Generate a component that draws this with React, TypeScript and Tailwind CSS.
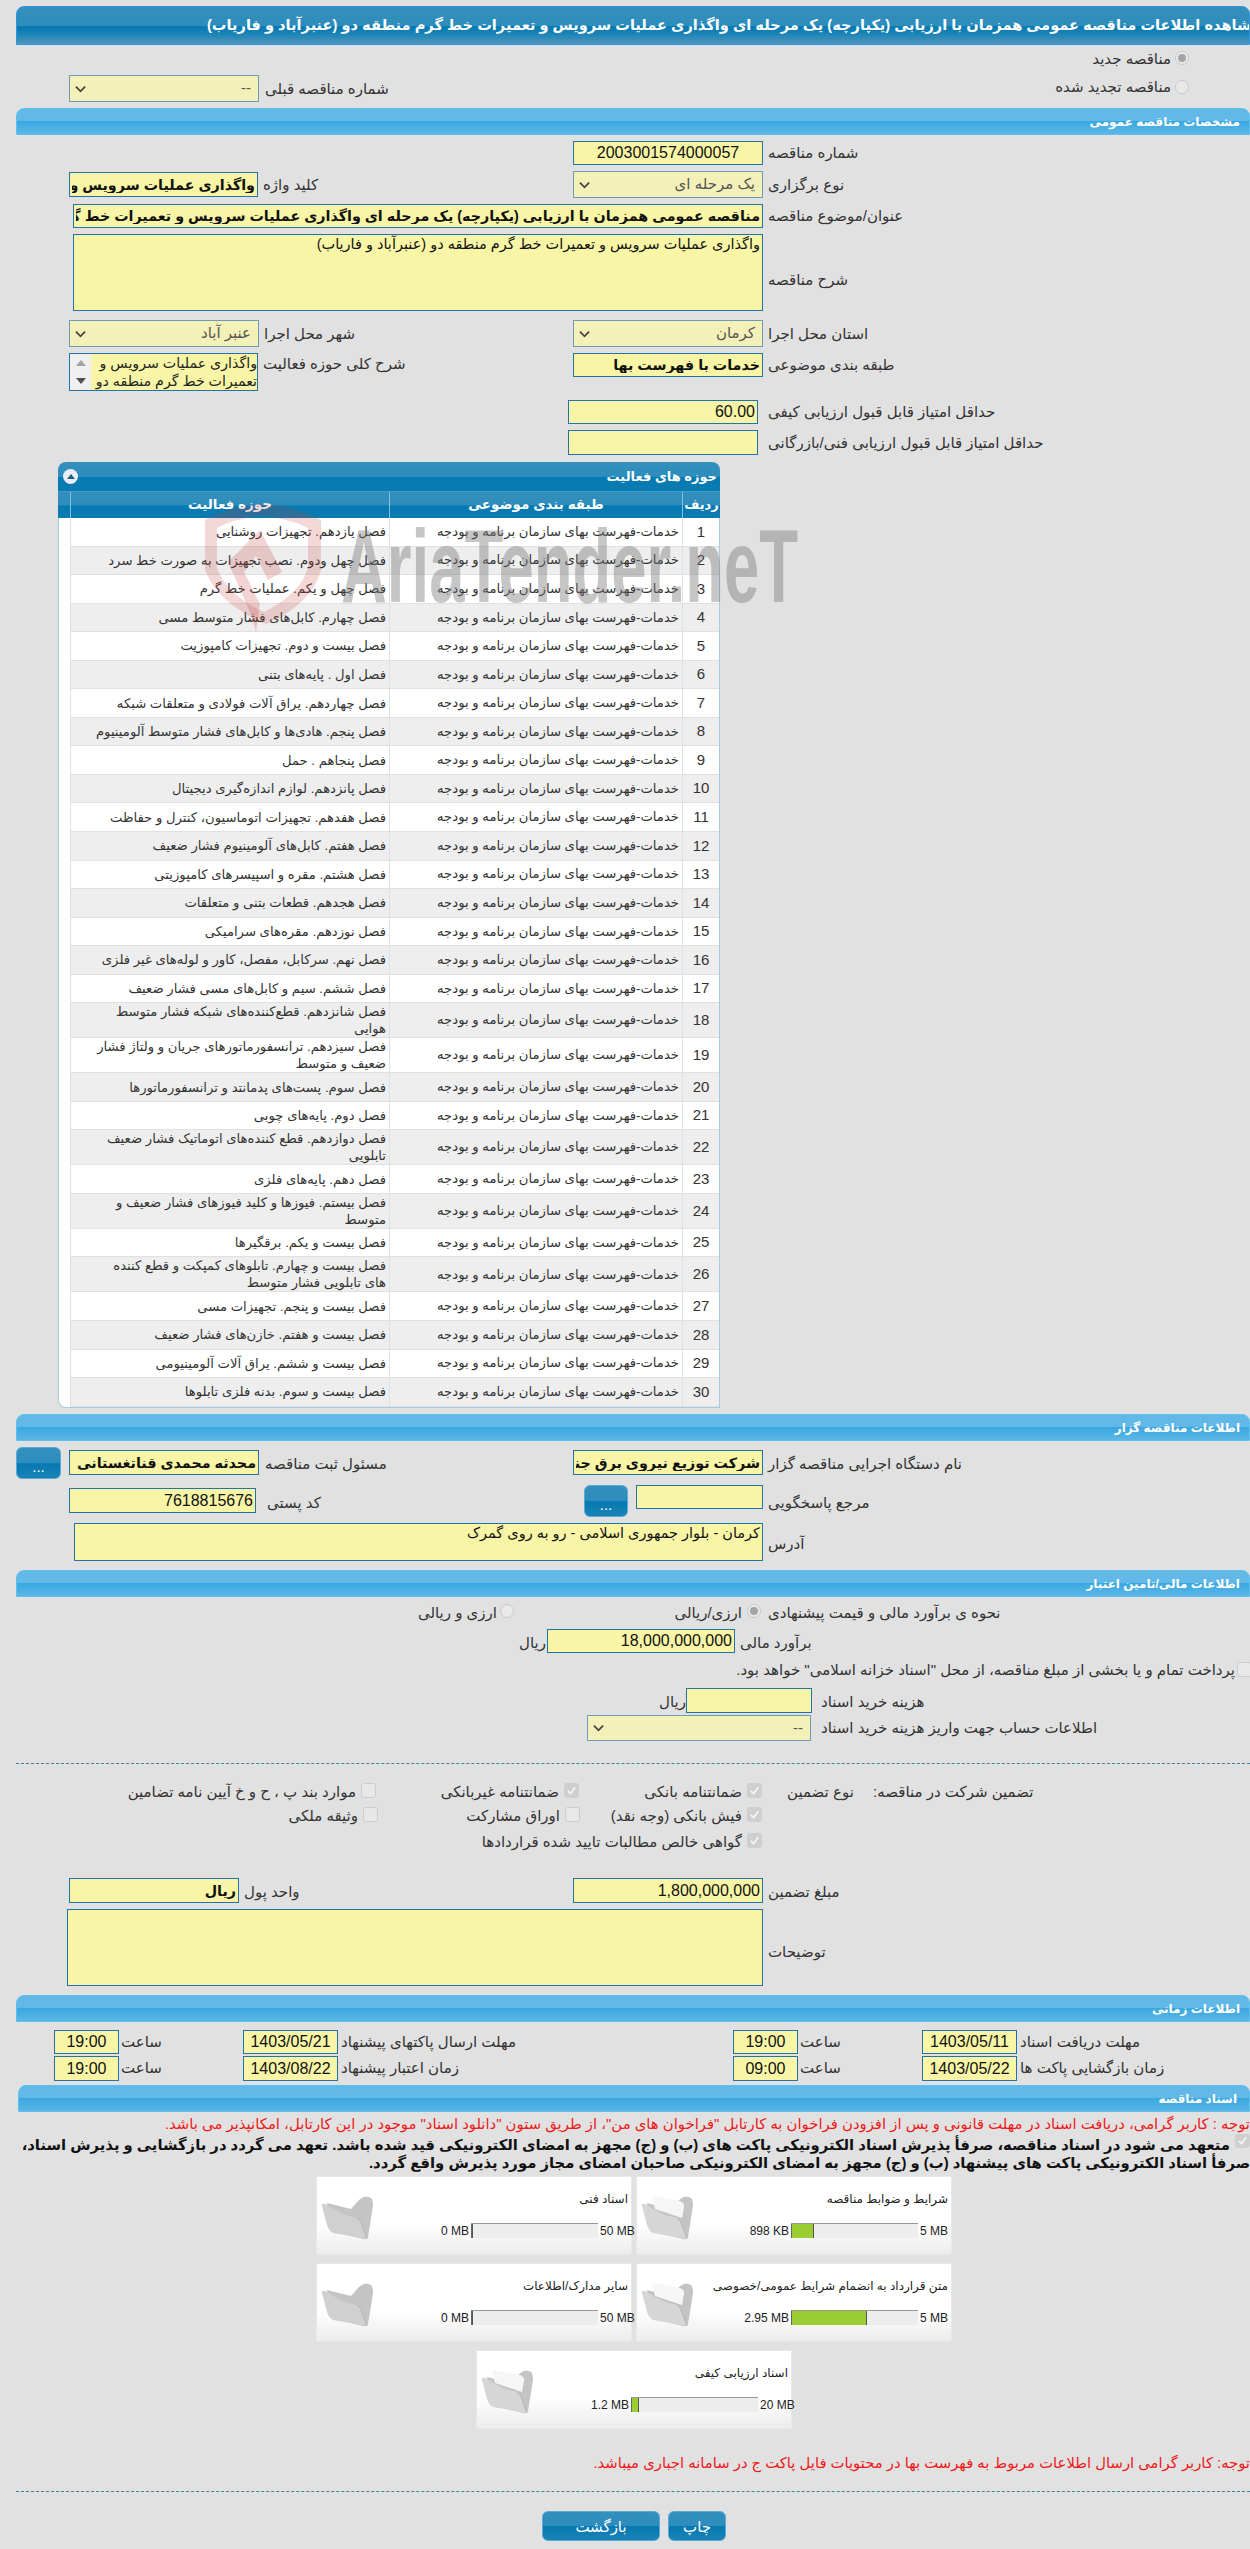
import React from "react";

const inp = "border border-[#2373aa] bg-[#f8f6a6] text-[#111] px-[2px] outline-none h-full min-w-0";
const lbl = "text-[15px] text-[#333] text-left whitespace-nowrap";
const opt = "text-[15px] text-[#333] whitespace-nowrap";
const sect = "h-[27px] rounded-t-[8px] border border-[#5cc0f0] bg-[linear-gradient(#62b9e8_0%,#62b9e8_48%,#3aa8e0_50%,#5cb6e6_100%)] text-white text-[12px] font-bold flex items-center";
const btn = "rounded-[6px] border border-[#5aa9d6] bg-[linear-gradient(#3290bd_0%,#2d8dbc_50%,#0579b1_52%,#1a83b6_100%)] text-white text-[15px] flex items-center justify-center";

const rows: string[] = [
  "فصل یازدهم. تجهیزات روشنایی",
  "فصل چهل ودوم. نصب تجهیزات به صورت خط سرد",
  "فصل چهل و یکم. عملیات خط گرم",
  "فصل چهارم. کابل‌های فشار متوسط مسی",
  "فصل بیست و دوم. تجهیزات کامپوزیت",
  "فصل اول . پایه‌های بتنی",
  "فصل چهاردهم. یراق آلات فولادی و متعلقات شبکه",
  "فصل پنجم. هادی‌ها و کابل‌های فشار متوسط آلومینیوم",
  "فصل پنجاهم . حمل",
  "فصل پانزدهم. لوازم اندازه‌گیری دیجیتال",
  "فصل هفدهم. تجهیزات اتوماسیون، کنترل و حفاظت",
  "فصل هفتم. کابل‌های آلومینیوم فشار ضعیف",
  "فصل هشتم. مقره و اسپیسرهای کامپوزیتی",
  "فصل هجدهم. قطعات بتنی و متعلقات",
  "فصل نوزدهم. مقره‌های سرامیکی",
  "فصل نهم. سرکابل، مفصل، کاور و لوله‌های غیر فلزی",
  "فصل ششم. سیم و کابل‌های مسی فشار ضعیف",
  "فصل شانزدهم. قطع‌کننده‌های شبکه فشار متوسط|هوایی",
  "فصل سیزدهم. ترانسفورماتورهای جریان و ولتاژ فشار|ضعیف و متوسط",
  "فصل سوم. پست‌های پدمانتد و ترانسفورماتورها",
  "فصل دوم. پایه‌های چوبی",
  "فصل دوازدهم. قطع کننده‌های اتوماتیک فشار ضعیف|تابلویی",
  "فصل دهم. پایه‌های فلزی",
  "فصل بیستم. فیوزها و کلید فیوزهای فشار ضعیف و|متوسط",
  "فصل بیست و یکم. برقگیرها",
  "فصل بیست و چهارم. تابلوهای کمپکت و قطع کننده|های تابلویی فشار متوسط",
  "فصل بیست و پنجم. تجهیزات مسی",
  "فصل بیست و هفتم. خازن‌های فشار ضعیف",
  "فصل بیست و ششم. یراق آلات آلومینیومی",
  "فصل بیست و سوم. بدنه فلزی تابلوها",
];

function Select({ value, className }: { value: string; className: string }) {
  return (
    <div dir="ltr" className={`border border-[#6f9bb5] bg-[#f3f0b8] h-full flex items-center justify-between pl-[5px] pr-[7px] ${className}`}>
      <svg viewBox="0 0 12 8" className="w-[11px] h-[8px] shrink-0">
        <path d="M1 1.5 L6 6.5 L11 1.5" fill="none" stroke="#444" strokeWidth="2" />
      </svg>
      <span dir="rtl" className="text-[15px] text-[#555] whitespace-nowrap">{value}</span>
    </div>
  );
}

function Input({ value, className, bold }: { value: string; className: string; bold?: boolean }) {
  return <input dir="rtl" readOnly value={value} className={`${inp} ${bold ? "font-bold text-[14.3px]" : "text-[16px]"} ${className}`} />;
}

function Label({ children, className }: { children: React.ReactNode; className?: string }) {
  return (
    <div dir="rtl" className={`${lbl} ${className || ""}`}>
      {children}
    </div>
  );
}

function Check({ checked, className }: { checked?: boolean; className?: string }) {
  return (
    <span className={`w-[15px] h-[15px] rounded-[3px] border shrink-0 flex items-center justify-center ${checked ? "bg-[#cfcfcf] border-[#cfcfcf]" : "bg-[#e8e8e8] border-[#cdcdcd]"} ${className || ""}`}>
      {checked && (
        <svg viewBox="0 0 12 12" className="w-[11px] h-[11px]">
          <path d="M2 6.5 L5 9.5 L10 2.5" fill="none" stroke="#f4f4f4" strokeWidth="2" />
        </svg>
      )}
    </span>
  );
}

function Radio({ checked, className }: { checked?: boolean; className?: string }) {
  return (
    <span className={`w-[14px] h-[14px] rounded-full border border-[#c8c8c8] bg-[#e9e9e9] shrink-0 flex items-center justify-center ${className || ""}`}>
      {checked && <span className="w-[8px] h-[8px] rounded-full bg-[#a4a4a4]" />}
    </span>
  );
}

function Folder({ full, className }: { full?: boolean; className?: string }) {
  return (
    <svg viewBox="0 0 52 46" className={`w-[52px] h-[46px] shrink-0 ${className || ""}`}>
      <path d="M6 9 L30 15 L38 6 Q44 0 50 4 Q52 6 52 12 L47 43 Q46 46 42 45 L14 38 Q10 37 8 30 Z" fill="#c4c4c4" />
      {full && <path d="M11 2 L39 7 Q44 9 43 13 L41 24 L14 15 Z" fill="#f6f6f6" />}
      <path d="M1 12 Q0 9 4 10 L14 16 L24 21 L36 24 Q40 26 42 34 L46 45 L12 39 Q8 37 6 31 Z" fill={full ? "#d6d6d6" : "#d0d0d0"} />
      <path d="M36 24 Q40 26 42 34 L46 45" fill="none" stroke="#b4b4b4" strokeWidth="1" />
    </svg>
  );
}

function FileCard({ title, used, max, pct, full, className }: { title: string; used: string; max: string; pct: number; full?: boolean; className?: string }) {
  return (
    <div className={`w-[316px] h-[79px] border border-[#e8e8e8] bg-[linear-gradient(#ffffff_0%,#ffffff_60%,#ececec_100%)] relative flex ${className || ""}`} dir="ltr">
      <Folder full={full} className="ml-[4px] mt-[17px]" />
      <div className="flex-1 min-w-0 flex flex-col pr-[3px]">
        <div dir="rtl" className="text-[12px] text-[#222] mt-[14px] h-[17px] leading-[17px] whitespace-nowrap">{title}</div>
        <div className="flex items-center justify-end mt-[15px] h-[15px]">
          <span className="text-[12px] text-[#222] mr-[2px] whitespace-nowrap [font-family:'Liberation_Sans',sans-serif]">{used}</span>
          <div className="w-[127px] h-[15px] bg-[#ededed] border-t border-t-[#999] flex">
            <div className="h-full bg-[#9acd32] border-l border-l-[#666] border-r border-r-[#555]" style={{ width: `${pct}%` }} />
          </div>
          <span className="text-[12px] text-[#222] ml-[2px] w-[28px] whitespace-nowrap [font-family:'Liberation_Sans',sans-serif]">{max}</span>
        </div>
      </div>
    </div>
  );
}

function DateRow({ date1, time1, date2, time2, label1, label2, className }: { date1: string; time1: string; date2: string; time2: string; label1: string; label2: string; className: string }) {
  return (
    <div dir="ltr" className={`flex ${className}`}>
      <Input value={time1} className="ml-[54px] w-[65px] text-center" />
      <Label className="ml-[2px] w-[122px] leading-[24px]">ساعت</Label>
      <Input value={date1} className="w-[95px] text-center" />
      <Label className="ml-[3px] w-[392px] leading-[24px]">{label1}</Label>
      <Input value={time2} className="w-[65px] text-center" />
      <Label className="ml-[2px] w-[122px] leading-[24px]">ساعت</Label>
      <Input value={date2} className="w-[95px] text-center" />
      <Label className="ml-[3px] leading-[24px]">{label2}</Label>
    </div>
  );
}

export default function App() {
  return (
    <div className="w-[1250px] h-[2549px] bg-[#e1e1e1] overflow-hidden [font-family:'Liberation_Sans','DejaVu_Sans',sans-serif]">
      <div className="h-[6px]" />
      {/* Title */}
      <div dir="ltr" className="ml-[16px] h-[39px] rounded-t-[8px] border border-[#2d97e0] bg-[linear-gradient(#358fbc_0%,#2d8dbc_50%,#0579b1_53%,#1a83b6_72%,#4e97bd_100%)] flex items-center overflow-hidden pl-[190px]">
        <div dir="rtl" className="text-white font-bold text-[14.6px] whitespace-nowrap text-left">
          مشاهده اطلاعات مناقصه عمومی همزمان با ارزیابی (یکپارچه) یک مرحله ای واگذاری عملیات سرویس و تعمیرات خط گرم منطقه دو (عنبرآباد و فاریاب)
        </div>
      </div>

      {/* New / renewed */}
      <div dir="ltr" className="flex h-[63px]">
        <div className="ml-[69px] mt-[30px] h-[27px] flex">
          <Select value="--" className="w-[190px]" />
          <Label className="ml-[6px] leading-[27px]">شماره مناقصه قبلی</Label>
        </div>
        <div dir="rtl" className="ml-auto mr-[61px] flex flex-col">
          <div className="flex items-center h-[28px] gap-[4px]"><Radio checked className="-mt-[2px]" /><span className={opt}>مناقصه جدید</span></div>
          <div className="flex items-center h-[29px] gap-[4px]"><Radio className="-mt-[2px]" /><span className={opt}>مناقصه تجدید شده</span></div>
        </div>
      </div>

      {/* General */}
      <div dir="rtl" className={`${sect} ml-[16px] pr-[9px]`}>مشخصات مناقصه عمومی</div>
      <div dir="ltr" className="flex h-[24px] mt-[6px]">
        <Input value="2003001574000057" className="ml-[573px] w-[190px] text-center" />
        <Label className="ml-[5px] leading-[24px]">شماره مناقصه</Label>
      </div>
      <div dir="ltr" className="flex h-[27px] mt-[6px]">
        <div className="ml-[69px] w-[190px] py-[1px]">
          <Input value="واگذاری عملیات سرویس و تعمیرات خط گرم" bold className="w-[189px]" />
        </div>
        <Label className="ml-[4px] w-[310px] leading-[27px]">کلید واژه</Label>
        <Select value="یک مرحله ای" className="w-[190px]" />
        <Label className="ml-[5px] leading-[27px]">نوع برگزاری</Label>
      </div>
      <div dir="ltr" className="flex h-[24px] mt-[6px]">
        <Input value="مناقصه عمومی همزمان با ارزیابی (یکپارچه) یک مرحله ای واگذاری عملیات سرویس و تعمیرات خط گرم منطقه دو (عنبرآباد و فاریاب)" bold className="ml-[73px] w-[690px]" />
        <Label className="ml-[5px] leading-[24px]">عنوان/موضوع مناقصه</Label>
      </div>
      <div dir="ltr" className="flex h-[77px] mt-[6px]">
        <textarea dir="rtl" readOnly value="واگذاری عملیات سرویس و تعمیرات خط گرم منطقه دو (عنبرآباد و فاریاب)" className={`${inp} ml-[73px] w-[690px] resize-none text-[14.5px] leading-[18px]`} />
        <Label className="ml-[5px] leading-[77px] pt-[7px]">شرح مناقصه</Label>
      </div>
      <div dir="ltr" className="flex h-[27px] mt-[9px]">
        <Select value="عنبر آباد" className="ml-[69px] w-[190px]" />
        <Label className="ml-[5px] w-[309px] leading-[27px]">شهر محل اجرا</Label>
        <Select value="کرمان" className="w-[190px]" />
        <Label className="ml-[5px] leading-[27px]">استان محل اجرا</Label>
      </div>
      <div dir="ltr" className="flex h-[38px] mt-[6px]">
        <div className="ml-[69px] w-[189px] h-[38px] border border-[#2373aa] flex bg-[#f8f6a6]">
          <div className="w-[21px] bg-[#f0f0f0] flex flex-col items-center justify-between py-[4px] shrink-0">
            <svg viewBox="0 0 10 6" className="w-[10px] h-[6px] mt-[2px]"><path d="M5 0 L10 6 L0 6 Z" fill="#a3a3a3" /></svg>
            <svg viewBox="0 0 10 6" className="w-[10px] h-[6px] mb-[2px]"><path d="M0 0 L10 0 L5 6 Z" fill="#505050" /></svg>
          </div>
          <div dir="rtl" className="flex-1 min-w-0 overflow-hidden text-[14.2px] leading-[18px] text-[#222] whitespace-nowrap">
            واگذاری عملیات سرویس و<br />تعمیرات خط گرم منطقه دو
          </div>
        </div>
        <Label className="ml-[5px] w-[310px] leading-[17px] pt-[2px]">شرح کلی حوزه فعالیت</Label>
        <div className="w-[190px] h-[24px]">
          <Input value="خدمات با فهرست بها" bold className="w-full" />
        </div>
        <Label className="ml-[5px] leading-[24px]">طبقه بندی موضوعی</Label>
      </div>
      <div dir="ltr" className="flex h-[24px] mt-[9px]">
        <Input value="60.00" className="ml-[568px] w-[190px]" />
        <Label className="ml-[10px] leading-[24px]">حداقل امتیاز قابل قبول ارزیابی کیفی</Label>
      </div>
      <div dir="ltr" className="flex h-[25px] mt-[6px]">
        <Input value="" className="ml-[568px] w-[190px]" />
        <Label className="ml-[10px] leading-[25px]">حداقل امتیاز قابل قبول ارزیابی فنی/بازرگانی</Label>
      </div>

      {/* Activity panel */}
      <div className="relative ml-[58px] mt-[7px] w-[662px] h-[945px]">
        <div className="w-full h-[29px] rounded-t-[8px] bg-[linear-gradient(#358fbc_0%,#2d8dbc_50%,#0579b1_53%,#0a7cb2_100%)] flex items-center justify-between px-[3px]" dir="ltr">
          <div className="w-[15px] h-[15px] rounded-full bg-[#e8eef5] ml-[2px] flex items-center justify-center">
            <svg viewBox="0 0 10 6" className="w-[8px] h-[5px]"><path d="M5 0 L10 6 L0 6 Z" fill="#1f5f85" /></svg>
          </div>
          <div dir="rtl" className="text-white font-bold text-[13px]">حوزه های فعالیت</div>
        </div>
        <div dir="ltr" className="flex h-[27px] border-t border-t-[#3a9fd0] bg-[linear-gradient(#358fbc_0%,#2d8dbc_50%,#0579b1_53%,#0a7cb2_100%)] text-white font-bold text-[13.5px]">
          <div className="w-[12px]" />
          <div dir="rtl" className="w-[320px] border-l border-l-[#7fc0e0] border-r border-r-[#7fc0e0] text-center leading-[26px]">حوزه فعالیت</div>
          <div dir="rtl" className="w-[293px] border-r border-r-[#7fc0e0] text-center leading-[26px]">طبقه بندی موضوعی</div>
          <div dir="rtl" className="w-[37px] text-center leading-[26px] text-[13px]">ردیف</div>
        </div>
        <div className="border-x border-x-[#a9cbe2] border-b border-b-[#a9cbe2] rounded-bl-[8px] bg-white overflow-hidden">
          {rows.map((r, i) => {
            const parts = r.split("|");
            const even = i % 2 === 1;
            const two = parts.length > 1;
            return (
              <div key={i} dir="ltr" className={`flex ${two ? "h-[35px]" : "h-[28.55px]"}`}>
                <div className="w-[11px] shrink-0" />
                <div dir="rtl" className={`w-[320px] shrink-0 border-l border-r border-b border-[#e0e0e0] flex items-center pr-[3px] text-[13.2px] leading-[17px] text-[#333] ${even ? "bg-[#eeeeee]" : "bg-white"}`}>
                  <div className="whitespace-nowrap">
                    {parts[0]}
                    {two && <br />}
                    {two && parts[1]}
                  </div>
                </div>
                <div dir="rtl" className={`w-[293px] shrink-0 border-r border-b border-[#e0e0e0] flex items-center pr-[3px] text-[13.2px] text-[#333] whitespace-nowrap ${even ? "bg-[#eeeeee]" : "bg-white"}`}>
                  خدمات-فهرست بهای سازمان برنامه و بودجه
                </div>
                <div className={`flex-1 border-b border-[#e0e0e0] flex items-center justify-center text-[15px] text-[#333] ${even ? "bg-[#eeeeee]" : "bg-white"}`}>{i + 1}</div>
              </div>
            );
          })}
        </div>
        {/* Watermark */}
        <svg viewBox="0 0 125 137" className="absolute left-[142px] top-[38px] w-[125px] h-[137px] pointer-events-none">
          <path d="M62 4 Q95 6 121 20 L121 70 Q112 104 66 124 Q18 104 5 70 L5 20 Q30 6 62 4 Z M17 28 L17 68 Q28 96 64 112 Q100 94 108 68 L108 28 Q88 18 62 16 Q36 18 17 28 Z" fill="#c83c3c" fillOpacity="0.2" fillRule="evenodd" />
          <path d="M28 62 L60 30 L82 72 L68 80 L56 56 L44 72 L60 104 L56 132 L50 112 Z" fill="#c83c3c" fillOpacity="0.22" />
        </svg>
        <div className="absolute left-[283px] top-[52px] pointer-events-none text-[rgba(120,120,120,0.42)] font-bold text-[104px] leading-[104px] whitespace-nowrap origin-top-left scale-x-[0.61] [font-family:'Liberation_Sans',sans-serif]" dir="ltr">
          AriaTender.neT
        </div>
      </div>

      {/* Tenderer */}
      <div className="h-[7px]" />
      <div dir="rtl" className={`${sect} ml-[16px] pr-[9px]`}>اطلاعات مناقصه گزار</div>
      <div dir="ltr" className="flex h-[32px] mt-[6px]">
        <div className={`${btn} ml-[16px] w-[45px] h-[32px] pt-[8px]`}>...</div>
        <div className="ml-[8px] h-[25px] mt-[3px] flex">
          <Input value="محدثه محمدی قناتغستانی" bold className="w-[190px]" />
          <Label className="ml-[6px] w-[308px] leading-[27px]">مسئول ثبت مناقصه</Label>
          <Input value="شرکت توزیع نیروی برق جنوب استان کرمان" bold className="w-[190px]" />
          <Label className="ml-[5px] leading-[27px]">نام دستگاه اجرایی مناقصه گزار</Label>
        </div>
      </div>
      <div dir="ltr" className="flex h-[32px] mt-[6px]">
        <div className="ml-[69px] w-[187px] h-[25px] mt-[3px]">
          <Input value="7618815676" className="w-full" />
        </div>
        <Label className="ml-[11px] w-[317px] leading-[36px]">کد پستی</Label>
        <div className={`${btn} w-[44px] h-[32px] pt-[8px]`}>...</div>
        <div className="ml-[8px] w-[127px] h-[24px]">
          <Input value="" className="w-full" />
        </div>
        <Label className="ml-[5px] leading-[36px]">مرجع پاسخگویی</Label>
      </div>
      <div dir="ltr" className="flex h-[38px] mt-[6px]">
        <textarea dir="rtl" readOnly value="کرمان - بلوار جمهوری اسلامی - رو به روی گمرک" className={`${inp} ml-[74px] w-[689px] resize-none text-[14.5px] leading-[18px]`} />
        <Label className="ml-[5px] leading-[38px] pt-[2px]">آدرس</Label>
      </div>

      {/* Financial */}
      <div className="h-[9px]" />
      <div dir="rtl" className={`${sect} ml-[16px] pr-[9px]`}>اطلاعات مالی/تامین اعتبار</div>
      <div dir="ltr" className="flex h-[32px] items-center">
        <div dir="rtl" className="ml-[420px] w-[94px] flex items-center gap-[3px]"><Radio className="-mt-[4px]" /><span className={opt}>ارزی و ریالی</span></div>
        <div dir="rtl" className="ml-[147px] w-[100px] flex items-center gap-[5px]"><Radio checked className="-mt-[4px]" /><span className={opt}>ارزی/ریالی</span></div>
        <Label className="ml-[7px]">نحوه ی برآورد مالی و قیمت پیشنهادی</Label>
      </div>
      <div dir="ltr" className="flex h-[24px]">
        <Label className="ml-[519px] w-[28px] leading-[27px]">ریال</Label>
        <Input value="18,000,000,000" className="w-[188px]" />
        <Label className="ml-[5px] leading-[27px]">برآورد مالی</Label>
      </div>
      <div dir="rtl" className="flex h-[35px] pt-[8px] gap-[2px] -mr-[2px]">
        <Check className="mt-[1px]" />
        <span className={`${opt} leading-[18px]`}>پرداخت تمام و یا بخشی از مبلغ مناقصه، از محل "اسناد خزانه اسلامی" خواهد بود.</span>
      </div>
      <div dir="ltr" className="flex h-[25px]">
        <Label className="ml-[662px] w-[24px] leading-[27px]">ریال</Label>
        <Input value="" className="w-[126px]" />
        <Label className="ml-[9px] leading-[27px]">هزینه خرید اسناد</Label>
      </div>
      <div dir="ltr" className="flex h-[26px] mt-[2px]">
        <Select value="--" className="ml-[587px] w-[224px]" />
        <Label className="ml-[10px] leading-[26px]">اطلاعات حساب جهت واریز هزینه خرید اسناد</Label>
      </div>
      <div className="ml-[16px] mt-[22px] border-t border-dashed border-t-[#3f7fa6]" />

      {/* Guarantee */}
      <div dir="ltr" className="flex h-[24px] mt-[16px] items-center">
        <div dir="rtl" className="w-[376px] flex items-center gap-[5px]"><Check className="-mt-[4px]" /><span className={opt}>موارد بند پ ، ح و خ آیین نامه تضامین</span></div>
        <div dir="rtl" className="w-[203px] flex items-center gap-[5px]"><Check checked className="-mt-[4px]" /><span className={opt}>ضمانتنامه غیربانکی</span></div>
        <div dir="rtl" className="w-[183px] flex items-center gap-[5px]"><Check checked className="-mt-[4px]" /><span className={opt}>ضمانتنامه بانکی</span></div>
        <Label className="ml-[25px] w-[86px]">نوع تضمین</Label>
        <Label>تضمین شرکت در مناقصه:</Label>
      </div>
      <div dir="ltr" className="flex h-[25px] items-center">
        <div dir="rtl" className="w-[378px] flex items-center gap-[5px]"><Check className="-mt-[4px]" /><span className={opt}>وثیقه ملکی</span></div>
        <div dir="rtl" className="w-[202px] flex items-center gap-[5px]"><Check className="-mt-[4px]" /><span className={opt}>اوراق مشارکت</span></div>
        <div dir="rtl" className="w-[182px] flex items-center gap-[5px]"><Check checked className="-mt-[4px]" /><span className={opt}>فیش بانکی (وجه نقد)</span></div>
      </div>
      <div dir="ltr" className="flex h-[26px] items-center">
        <div dir="rtl" className="w-[762px] flex items-center gap-[5px]"><Check checked className="-mt-[4px]" /><span className={opt}>گواهی خالص مطالبات تایید شده قراردادها</span></div>
      </div>

      <div dir="ltr" className="flex h-[25px] mt-[23px]">
        <Input value="ریال" bold className="ml-[69px] w-[170px]" />
        <Label className="ml-[5px] w-[329px] leading-[27px]">واحد پول</Label>
        <Input value="1,800,000,000" className="w-[190px]" />
        <Label className="ml-[5px] leading-[27px]">مبلغ تضمین</Label>
      </div>
      <div dir="ltr" className="flex h-[77px] mt-[6px]">
        <textarea dir="rtl" readOnly value="" className={`${inp} ml-[67px] w-[696px] resize-none`} />
        <Label className="ml-[5px] leading-[77px] pt-[4px]">توضیحات</Label>
      </div>

      {/* Time */}
      <div className="h-[9px]" />
      <div dir="rtl" className={`${sect} ml-[16px] pr-[9px]`}>اطلاعات زمانی</div>
      <DateRow className="h-[24px] mt-[8px]" time1="19:00" date1="1403/05/21" label1="مهلت ارسال پاکتهای پیشنهاد" time2="19:00" date2="1403/05/11" label2="مهلت دریافت اسناد" />
      <DateRow className="h-[25px] mt-[2px]" time1="19:00" date1="1403/08/22" label1="زمان اعتبار پیشنهاد" time2="09:00" date2="1403/05/22" label2="زمان بازگشایی پاکت ها" />

      {/* Documents */}
      <div className="h-[4px]" />
      <div dir="rtl" className={`${sect} ml-[18px] pr-[12px]`}>اسناد مناقصه</div>
      <div dir="ltr" className="h-[22px] overflow-hidden pl-[165px]">
        <div dir="rtl" className="text-left whitespace-nowrap text-[14.85px] leading-[24px] text-[#f01818]">
          توجه : کاربر گرامی، دریافت اسناد در مهلت قانونی و پس از افزودن فراخوان به کارتابل "فراخوان های من"، از طریق ستون "دانلود اسناد" موجود در این کارتابل، امکانپذیر می باشد.
        </div>
      </div>
      <div dir="rtl" className="flex h-[42px] overflow-hidden">
        <Check checked className="mt-[-1px]" />
        <div className="font-bold text-[14.8px] leading-[18px] text-[#111] pt-[2px] pr-[5px] whitespace-nowrap">
          متعهد می شود در اسناد مناقصه، صرفأ پذیرش اسناد الکترونیکی پاکت های (ب) و (ج) مجهز به امضای الکترونیکی قید شده باشد. تعهد می گردد در بازگشایی و پذیرش اسناد،
          <div className="-mr-[20px]">صرفأ اسناد الکترونیکی پاکت های پیشنهاد (ب) و (ج) مجهز به امضای الکترونیکی صاحبان امضای مجاز مورد پذیرش واقع گردد.</div>
        </div>
      </div>

      <div dir="ltr" className="flex ml-[316px] gap-[4px]">
        <FileCard title="اسناد فنی" used="0 MB" max="50 MB" pct={0} />
        <FileCard title="شرایط و ضوابط مناقصه" used="898 KB" max="5 MB" pct={18} full />
      </div>
      <div dir="ltr" className="flex mt-[8px] ml-[316px] gap-[4px]">
        <FileCard title="سایر مدارک/اطلاعات" used="0 MB" max="50 MB" pct={0} />
        <FileCard title="متن قرارداد به انضمام شرایط عمومی/خصوصی" used="2.95 MB" max="5 MB" pct={60} full />
      </div>
      <div dir="ltr" className="flex mt-[8px] ml-[476px]">
        <FileCard title="اسناد ارزیابی کیفی" used="1.2 MB" max="20 MB" pct={6} full />
      </div>

      <div dir="ltr" className="h-[22px] mt-[23px] overflow-hidden pl-[595px]">
        <div dir="rtl" className="text-left whitespace-nowrap text-[14.8px] leading-[22px] text-[#f01818]">
          توجه: کاربر گرامی ارسال اطلاعات مربوط به فهرست بها در محتویات فایل پاکت ج در سامانه اجباری میباشد.
        </div>
      </div>
      <div className="ml-[16px] mt-[17px] border-t border-dashed border-t-[#3f7fa6]" />
      <div dir="ltr" className="flex mt-[19px] ml-[542px] gap-[8px]">
        <div dir="rtl" className={`${btn} w-[118px] h-[30px] pt-[2px]`}>بازگشت</div>
        <div dir="rtl" className={`${btn} w-[58px] h-[30px] pt-[2px]`}>چاپ</div>
      </div>
    </div>
  );
}
